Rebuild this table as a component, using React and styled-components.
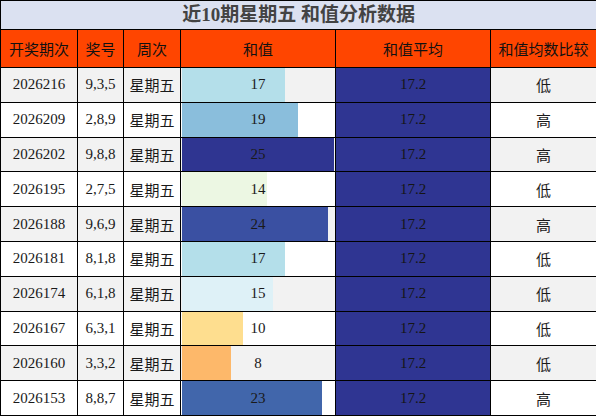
import React from "react"
import styled, { createGlobalStyle } from "styled-components"

const GlobalStyle = createGlobalStyle`
  html, body {
    margin: 0;
    padding: 0;
    background: #ffffff;
  }
  body {
    font-family: "Liberation Serif", "Noto Sans CJK SC", serif;
  }
`

const rows = [
  { issue: "2026216", nums: "9,3,5", sum: 17, color: "#b4dfea", cmp: "低" },
  { issue: "2026209", nums: "2,8,9", sum: 19, color: "#8abedc", cmp: "高" },
  { issue: "2026202", nums: "9,8,8", sum: 25, color: "#2f3591", cmp: "高" },
  { issue: "2026195", nums: "2,7,5", sum: 14, color: "#ecf7e3", cmp: "低" },
  { issue: "2026188", nums: "9,6,9", sum: 24, color: "#3a50a2", cmp: "高" },
  { issue: "2026181", nums: "8,1,8", sum: 17, color: "#b4dfea", cmp: "低" },
  { issue: "2026174", nums: "6,1,8", sum: 15, color: "#def1f7", cmp: "低" },
  { issue: "2026167", nums: "6,3,1", sum: 10, color: "#fede8f", cmp: "低" },
  { issue: "2026160", nums: "3,3,2", sum: 8, color: "#fdb86a", cmp: "低" },
  { issue: "2026153", nums: "8,8,7", sum: 23, color: "#4166ab", cmp: "高" },
]

const MAX = 25

const Table = styled.table`
  width: 596px;
  border-collapse: collapse;
  table-layout: fixed;
  td, th {
    border: 1px solid #000;
    padding: 0;
    text-align: center;
  }
`

const TitleCell = styled.th`
  height: 28px;
  background: #dbe1f1;
  color: #434343;
  font-family: "Liberation Serif", "Noto Sans CJK SC", serif;
  font-size: 19px;
  font-weight: bold;
  line-height: 28px;
`

const HeadCell = styled.th`
  height: 37px;
  background: #ff4500;
  color: #111;
  font-family: "Noto Sans CJK SC", sans-serif;
  font-size: 15px;
  font-weight: normal;
`

const Row = styled.tr`
  height: 34.8px;
  background: ${p => (p.$odd ? "#f2f2f2" : "#ffffff")};
`

const Cell = styled.td`
  font-size: 15px;
  color: #1a1a1a;
  font-family: ${p => (p.$cjk ? `"Noto Sans CJK SC", sans-serif` : `"Liberation Serif", serif`)};
`

const AvgCell = styled(Cell)`
  background: #2f3592;
  color: #151515;
`

const BarCell = styled.td`
  position: relative;
  font-size: 15px;
  color: #1a1a1a;
  font-family: "Liberation Serif", serif;
`

const Bar = styled.div`
  position: absolute;
  left: 1px;
  top: 0;
  bottom: 0;
  background: ${p => p.$color};
`

const BarLabel = styled.span`
  position: relative;
`

export default function App() {
  return (
    <>
      <GlobalStyle />
      <Table>
        <colgroup>
          <col style={{ width: 77 }} />
          <col style={{ width: 46 }} />
          <col style={{ width: 57 }} />
          <col style={{ width: 155 }} />
          <col style={{ width: 155 }} />
          <col style={{ width: 106 }} />
        </colgroup>
        <thead>
          <tr>
            <TitleCell colSpan={6}>近10期星期五 和值分析数据</TitleCell>
          </tr>
          <tr>
            <HeadCell>开奖期次</HeadCell>
            <HeadCell>奖号</HeadCell>
            <HeadCell>周次</HeadCell>
            <HeadCell>和值</HeadCell>
            <HeadCell>和值平均</HeadCell>
            <HeadCell>和值均数比较</HeadCell>
          </tr>
        </thead>
        <tbody>
          {rows.map((r, i) => (
            <Row key={r.issue} $odd={i % 2 === 0}>
              <Cell>{r.issue}</Cell>
              <Cell>{r.nums}</Cell>
              <Cell $cjk>星期五</Cell>
              <BarCell>
                <Bar
                  $color={r.color}
                  style={{ width: `calc((100% - 2px) * ${r.sum / MAX})` }}
                />
                <BarLabel>{r.sum}</BarLabel>
              </BarCell>
              <AvgCell>17.2</AvgCell>
              <Cell $cjk>{r.cmp}</Cell>
            </Row>
          ))}
        </tbody>
      </Table>
    </>
  )
}
